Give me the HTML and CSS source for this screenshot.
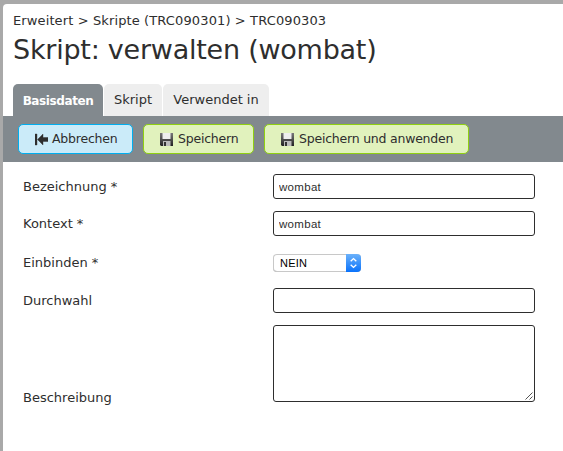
FILE: index.html
```html
<!DOCTYPE html>
<html lang="de">
<head>
<meta charset="utf-8">
<title>Skript: verwalten (wombat)</title>
<link rel="stylesheet" href="styles.css">
</head>
<body>
<svg width="0" height="0" class="defs" aria-hidden="true">
  <defs>
    <linearGradient id="metal" x1="0" y1="0" x2="0" y2="1"><stop offset="0" stop-color="#777"/><stop offset="1" stop-color="#222"/></linearGradient>
    <symbol id="disk" viewBox="0 0 13 13">
      <path d="M0 0h13v13H1L0 12z" fill="url(#metal)"/>
      <path d="M2.5 0h8v6h-8z" fill="#eee"/>
      <path d="M3 8h7.5v5H3z" fill="#bbb"/>
      <path d="M4 9h2v4H4z" fill="#333"/>
    </symbol>
  </defs>
</svg>
<main class="panel">
  <nav class="crumbs">Erweitert &gt; Skripte (TRC090301) &gt; TRC090303</nav>
  <h1 class="title">Skript: verwalten (wombat)</h1>
  <div class="tabs">
    <a class="tab active">Basisdaten</a>
    <a class="tab script">Skript</a>
    <a class="tab used">Verwendet in</a>
  </div>
  <div class="toolbar">
    <button class="btn cancel"><svg class="icon" viewBox="0 0 13 13"><path d="M0 1h2v11H0zM2.5 6.5L8 1v3.5h5v4H8V12z" fill="#2e2e2e" stroke="#2e2e2e" stroke-width=".4"/></svg>Abbrechen</button>
    <button class="btn save"><svg class="icon"><use href="#disk"/></svg>Speichern</button>
    <button class="btn apply"><svg class="icon"><use href="#disk"/></svg>Speichern und anwenden</button>
  </div>
  <form class="form">
    <label>Bezeichnung *</label><input class="field" value="wombat">
    <label>Kontext *</label><input class="field" value="wombat">
    <label class="shift">Einbinden *</label>
    <div class="select shift"><span>NEIN</span><svg class="arrows" viewBox="0 0 15 18"><path d="M4.7 7.2L7.5 4.6l2.8 2.6M4.7 10.8l2.8 2.6 2.8-2.6" fill="none" stroke="#fff" stroke-width="1.4"/></svg></div>
    <label>Durchwahl</label><input class="field">
    <label class="low">Beschreibung</label>
    <div class="area"><svg class="grip" viewBox="0 0 8 8"><path d="M.5 7.5l7-7M4.5 7.5l3-3" stroke="#555" fill="none"/></svg></div>
  </form>
</main>
</body>
</html>
```
FILE: styles.css
```css
* { box-sizing: border-box; }
body {
  margin: 0;
  padding: 4px 0 0 3px;
  height: 451px;
  overflow: hidden;
  background: #a9a9a9;
  color: #2e2e2e;
  font: 13px/16px Verdana, "DejaVu Sans", sans-serif;
}
.defs { position: absolute; }
.panel {
  height: 447px;
  background: #fff;
  border-top-left-radius: 4px;
}
.crumbs { padding: 9px 0 0 10px; white-space: nowrap; letter-spacing: .12px; }
.title {
  margin: 3px 0 0 10px;
  font-size: 27px;
  line-height: 36px;
  font-weight: normal;
  letter-spacing: -.24px;
  white-space: nowrap;
}
.tabs { display: flex; gap: 1px; height: 32px; margin: 16px 0 0 10px; }
.tab {
  padding-top: 8px;
  border-radius: 5px 5px 0 0;
  background: #eee;
  text-align: center;
  white-space: nowrap;
}
.active {
  width: 90px;
  padding-top: 9px;
  background: #82898e;
  color: #fff;
  font-weight: bold;
  font-size: 12px;
  letter-spacing: -.4px;
}
.script { width: 58px; }
.used { width: 106px; }
.toolbar {
  display: flex;
  gap: 10px;
  height: 46px;
  padding: 8px 0 8px 15px;
  background: #82898e;
}
.btn {
  display: flex;
  align-items: center;
  gap: 4px;
  padding: 0 0 0 16px;
  border: 1px solid #90d011;
  border-radius: 5px;
  background: #e1f2bd;
  color: #2e2e2e;
  font: inherit;
  font-size: 12.5px;
  letter-spacing: -.22px;
  white-space: nowrap;
}
.cancel { width: 115px; background: #cbebf9; border-color: #00aeef; }
.save { width: 111px; }
.apply { width: 205px; }
.icon { width: 13px; height: 13px; flex: none; }
.save .icon, .apply .icon { margin-right: 1px; }
.form {
  display: grid;
  grid-template-columns: 250px 262px;
  grid-template-rows: 25px 25px 28px 25px 77px;
  row-gap: 12px;
  align-items: center;
  padding: 12px 0 0 20px;
}
.shift { margin-top: 2px; }
.field, .area {
  width: 262px;
  height: 25px;
  border: 1px solid #2e2e2e;
  border-radius: 3px;
  background: #fff;
}
.field {
  padding: 1px 5px 0;
  color: #2e2e2e;
  font: 11.5px "Liberation Sans", sans-serif;
  letter-spacing: .3px;
}
.select {
  display: flex;
  justify-content: space-between;
  align-items: center;
  width: 88px;
  height: 18px;
  padding-left: 7px;
  border-radius: 4px;
  overflow: hidden;
  color: #000;
  font: 11px "Liberation Sans", sans-serif;
  letter-spacing: .2px;
  box-shadow: inset 0 0 0 1px #c8c8c8, inset 0 -1px 0 #b0b0b0;
}
.arrows { width: 15px; height: 18px; background: linear-gradient(#6bb1fa, #0a72fb); }
.low { align-self: end; margin-bottom: -4px; }
.area { display: flex; justify-content: flex-end; align-items: flex-end; height: 77px; padding: 0 1px 1px 0; }
.grip { width: 8px; height: 8px; }
```
